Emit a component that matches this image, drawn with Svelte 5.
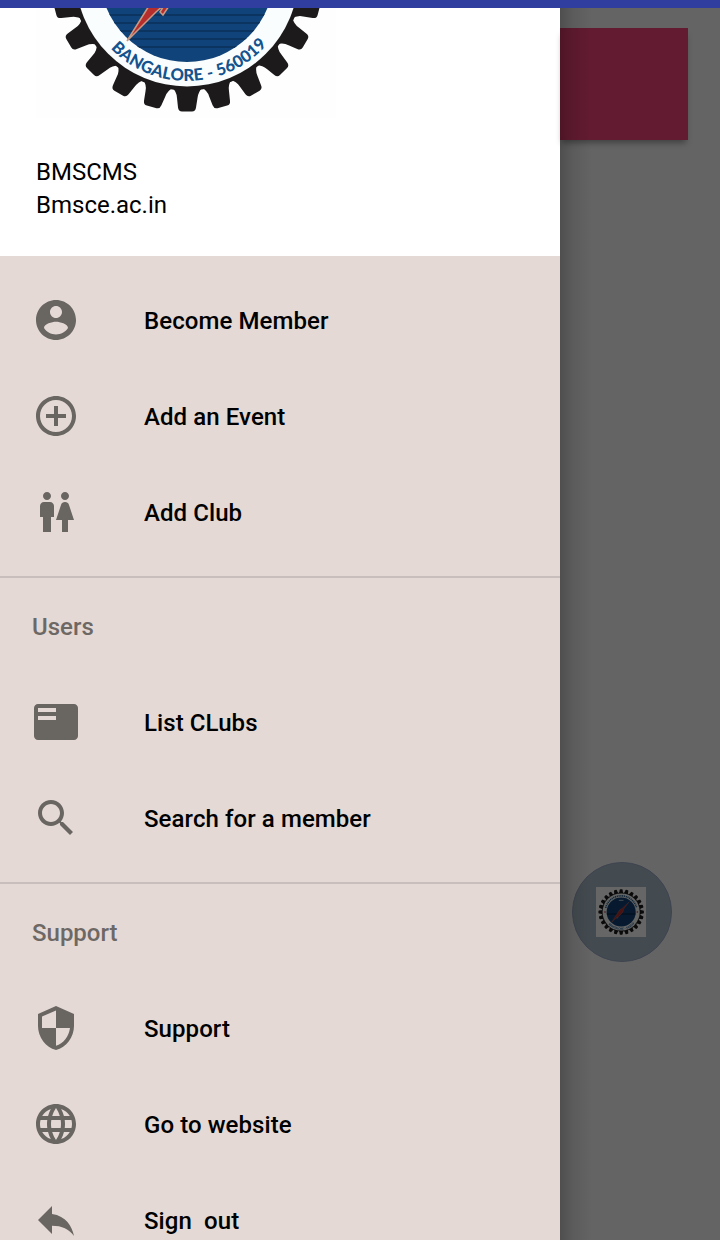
<script>
  const icons = {
    account: 'M12 2C6.48 2 2 6.48 2 12s4.48 10 10 10 10-4.48 10-10S17.52 2 12 2zm0 3c1.66 0 3 1.34 3 3s-1.34 3-3 3-3-1.34-3-3 1.34-3 3-3zm0 14.2c-2.5 0-4.71-1.28-6-3.22.03-1.99 4-3.08 6-3.08 1.99 0 5.97 1.09 6 3.08-1.29 1.94-3.5 3.22-6 3.22z',
    add: 'M13 7h-2v4H7v2h4v4h2v-4h4v-2h-4V7zm-1-5C6.48 2 2 6.48 2 12s4.48 10 10 10 10-4.48 10-10S17.52 2 12 2zm0 18c-4.41 0-8-3.59-8-8s3.59-8 8-8 8 3.59 8 8-3.59 8-8 8z',
    people: 'M5.5 22v-7.5H4V9c0-1.1.9-2 2-2h3c1.1 0 2 .9 2 2v5.5H9.5V22h-4zM18 22v-6h3l-2.54-7.63C18.18 7.55 17.42 7 16.56 7h-.12c-.86 0-1.63.55-1.9 1.37L12 16h3v6h3zM7.5 6c1.11 0 2-.89 2-2s-.89-2-2-2-2 .89-2 2 .89 2 2 2zm9 0c1.11 0 2-.89 2-2s-.89-2-2-2-2 .89-2 2 .89 2 2 2z',
    list: 'M21 3H3c-1.1 0-2 .9-2 2v14c0 1.1.9 2 2 2h18c1.1 0 2-.9 2-2V5c0-1.1-.9-2-2-2zm-9 8H3V9h9v2zm0-4H3V5h9v2z',
    search: 'M15.5 14h-.79l-.28-.27C15.41 12.59 16 11.11 16 9.5 16 5.91 13.09 3 9.5 3S3 5.91 3 9.5 5.91 16 9.5 16c1.61 0 3.09-.59 4.23-1.57l.27.28v.79l5 4.99L20.49 19l-4.99-5zm-6 0C7.01 14 5 11.99 5 9.5S7.01 5 9.5 5 14 7.01 14 9.5 11.99 14 9.5 14z',
    shield: 'M12 1L3 5v6c0 5.55 3.84 10.74 9 12 5.16-1.26 9-6.45 9-12V5l-9-4zm0 10.99h7c-.53 4.12-3.28 7.79-7 8.94V12H5V6.3l7-3.11v8.8z',
    globe: 'M11.99 2C6.47 2 2 6.48 2 12s4.47 10 9.99 10C17.52 22 22 17.52 22 12S17.52 2 11.99 2zm6.93 6h-2.95c-.32-1.25-.78-2.45-1.38-3.56 1.84.63 3.37 1.91 4.33 3.56zM12 4.04c.83 1.2 1.48 2.53 1.91 3.96h-3.82c.43-1.43 1.08-2.76 1.91-3.96zM4.26 14C4.1 13.36 4 12.69 4 12s.1-1.36.26-2h3.38c-.08.66-.14 1.32-.14 2s.06 1.34.14 2H4.26zm.82 2h2.95c.32 1.25.78 2.45 1.38 3.56-1.84-.63-3.37-1.9-4.33-3.56zm2.95-8H5.08c.96-1.66 2.49-2.93 4.33-3.56C8.81 5.55 8.35 6.75 8.03 8zM12 19.96c-.83-1.2-1.48-2.53-1.91-3.96h3.82c-.43 1.43-1.08 2.76-1.91 3.96zM14.34 14H9.66c-.09-.66-.16-1.32-.16-2s.07-1.35.16-2h4.68c.09.65.16 1.32.16 2s-.07 1.34-.16 2zm.25 5.56c.6-1.11 1.06-2.31 1.38-3.56h2.95c-.96 1.65-2.49 2.93-4.33 3.56zM16.36 14c.08-.66.14-1.32.14-2s-.06-1.34-.14-2h3.38c.16.64.26 1.31.26 2s-.1 1.36-.26 2h-3.38z',
    reply: 'M10 9V5l-7 7 7 7v-4.1c5 0 8.5 1.6 11 5.1-1-5-4-10-11-11z'
  };
  const groups = [
    { items: [['account', 'Become Member'], ['add', 'Add an Event'], ['people', 'Add Club']] },
    { title: 'Users', items: [['list', 'List CLubs'], ['search', 'Search for a member']] },
    { title: 'Support', items: [['shield', 'Support'], ['globe', 'Go to website'], ['reply', 'Sign  out']] }
  ];
  const teeth = Array.from({ length: 24 }, (_, i) => i * 15);
  const lines = Array.from({ length: 20 }, (_, i) => 70 + i * 8);
</script>

{#snippet logo(id)}
  <svg class="logo" viewBox="0 0 300 300">
    <defs>
      <path id="{id}-arc" d="M45 150a106 106 0 0 0 212 0" />
      <clipPath id="{id}-disc"><circle cx="151" cy="150" r="87" /></clipPath>
    </defs>
    <rect width="300" height="300" fill="#fefefe" />
    <g fill="#1c1a1b">
      <circle cx="151" cy="150" r="115.500" />
      {#each teeth as a}
        <path d="M135.500 262Q141 267 141 273L142 282.500Q142.500 286.500 146 286.500H156Q159.500 286.500 160 282.500L161.500 273Q162 267 167 262Z" transform="rotate({a} 151 150)" />
      {/each}
    </g>
    <circle cx="151" cy="150" r="111.5" fill="#fafdfd" />
    <circle cx="151" cy="150" r="87" fill="#104379" />
    <g clip-path="url(#{id}-disc)" stroke="#0b3560" stroke-width="2">
      {#each lines as y}<path d="M60 {y}h184" />{/each}
      <path d="M60 162h184" stroke="#071c33" stroke-width="5" />
    </g>
    <path d="M58 125a96 96 0 0 1 186 0" fill="none" stroke="#2c5f8e" stroke-width="10" stroke-dasharray="7 4" />
    <path d="M137 80h28" stroke="#c9d6e2" stroke-width="5" />
    <g fill="#b52d2c"><circle cx="54" cy="150" r="5" /><circle cx="248" cy="150" r="5" /></g>
    <path d="M91 216L111 184 126 162 142 137 158 127 200 88 166 133 162 150 135 178 127 190 124 187 129 179 120 187Z" fill="#b52d2c" stroke="#c99a83" stroke-width="1.500" />
    <text class="ring" fill="#14538e"><textPath href="#{id}-arc" startOffset="81" textLength="176" lengthAdjust="spacing">BANGALORE - 560019</textPath></text>
  </svg>
{/snippet}

<div class="screen">
  <div class="status"></div>
  <div class="body">
    <nav class="drawer">
      <header>
        <div class="crop"><div class="big">{@render logo('header')}</div></div>
        <div class="name">BMSCMS</div>
        <div class="name">Bmsce.ac.in</div>
      </header>
      {#each groups as group}
        <section>
          {#if group.title}<h2>{group.title}</h2>{/if}
          {#each group.items as [icon, label]}
            <div class="row">
              <svg class="icon" viewBox="0 0 24 24"><path d={icons[icon]} /></svg>
              <span>{label}</span>
            </div>
          {/each}
        </section>
      {/each}
    </nav>
    <main>
      <div class="card"></div>
      <div class="fab"><div class="thumb">{@render logo('fab')}</div></div>
      <div class="edge"></div>
    </main>
  </div>
</div>

<style>
  :global(body) { margin: 0; }
  .screen {
    display: flex;
    flex-direction: column;
    width: 720px;
    height: 1240px;
    overflow: hidden;
    font-family: Roboto, sans-serif;
    color: #000;
  }
  .status { height: 8px; flex: none; background: #303f9f; }
  .body { display: flex; height: 1232px; }
  .drawer { width: 560px; flex: none; overflow: hidden; background: #e4d9d5; }
  header {
    box-sizing: border-box;
    height: 248px;
    padding-left: 36px;
    background: #fff;
  }
  .crop {
    width: 300px;
    height: 110px;
    display: flex;
    align-items: flex-end;
    box-sizing: border-box;
    margin-bottom: 38px;
    overflow: hidden;
  }
  .big { width: 300px; height: 300px; flex: none; margin-bottom: -7px; }
  .logo { display: block; width: 100%; height: 100%; }
  .ring { font: 900 16.5px Lato, sans-serif; }
  .name { font-size: 24px; line-height: 33px; }
  section { padding-bottom: 16px; }
  header + section { padding-top: 16px; }
  section + section { border-top: 2px solid #c8bebc; }
  h2 {
    box-sizing: border-box;
    height: 96px;
    margin: 0;
    padding: 1px 0 0 32px;
    font-size: 24px;
    font-weight: 500;
    line-height: 96px;
    color: #6e6865;
  }
  .row {
    display: flex;
    align-items: center;
    gap: 64px;
    height: 96px;
    padding-left: 32px;
    font-size: 24px;
    font-weight: 500;
    letter-spacing: 0.08px;
    white-space: pre;
  }
  .row span { padding-top: 2px; }
  .icon { width: 48px; height: 48px; flex: none; fill: #696561; }
  main {
    position: relative;
    display: flex;
    flex-direction: column;
    justify-content: space-between;
    box-sizing: border-box;
    width: 160px;
    padding: 20px 32px 278px 0;
    background: #646464;
  }
  .card { height: 112px; background: #631b31; box-shadow: 0 5px 6px -2px rgba(0, 0, 0, 0.35); }
  .fab {
    display: grid;
    place-items: center;
    box-sizing: border-box;
    width: 100px;
    height: 100px;
    margin-left: 12px;
    border: 1px solid #3e4450;
    border-radius: 50%;
    background: #444b50;
  }
  .thumb { width: 50px; height: 50px; margin-right: 2px; filter: brightness(0.4); }
  .edge {
    position: absolute;
    inset: 0 auto 0 0;
    width: 32px;
    background: linear-gradient(90deg, rgba(0, 0, 0, 0.22), rgba(0, 0, 0, 0.09) 40%, transparent);
  }
</style>
